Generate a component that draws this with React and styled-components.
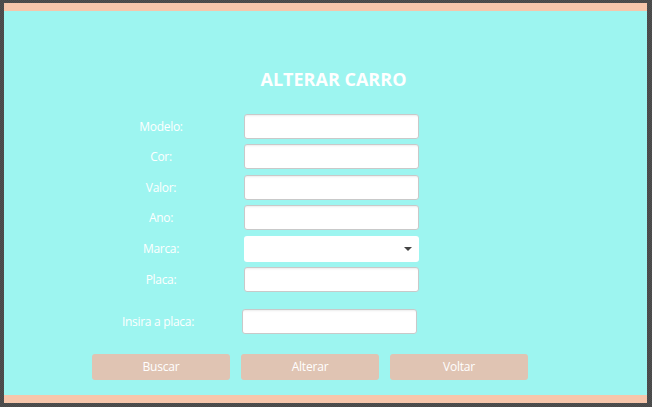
import React from 'react';
import styled, { createGlobalStyle } from 'styled-components';

const GlobalStyle = createGlobalStyle`
   html, body {
      margin: 0;
      padding: 0;
      background: #4b4b4b;
      font-family: "Open Sans", "Liberation Sans", sans-serif;
   }
`;

const Frame = styled.div`
   width: 652px;
   height: 407px;
   box-sizing: border-box;
   padding: 3px 5px 4px 4px;
   background-color: #4b4b4b;
   background-image: repeating-conic-gradient(#474747 0 25%, #505050 0 50%);
   background-size: 2px 2px;
`;

const Panel = styled.div`
   height: 100%;
   box-sizing: border-box;
   background: #9df5f0;
   border-top: 8px solid #f6c6ab;
   border-bottom: 8px solid #f6c6ab;
   display: flex;
   flex-direction: column;
`;

const Title = styled.h1`
   margin: 58px 0 0 0;
   padding-left: 16px;
   text-align: center;
   font-size: 18px;
   line-height: 20px;
   font-weight: 700;
   color: #ffffff;
`;

const Form = styled.div`
   margin: 25px 0 0 88px;
   display: grid;
   grid-template-columns: 138px 175px;
   column-gap: 14px;
   row-gap: 5.4px;
`;

const Label = styled.span`
   display: flex;
   align-items: center;
   justify-content: center;
   font-size: 12px;
   font-weight: 400;
   letter-spacing: -0.3px;
   color: #ffffff;
`;

const Input = styled.input`
   height: 25px;
   box-sizing: border-box;
   margin: 0;
   border: 1px solid #c9c9c9;
   border-radius: 3px;
   background: #ffffff;
   box-shadow: inset 0 2px 2px -1px rgba(0, 0, 0, 0.08);
   outline: none;
`;

const Select = styled.div`
   height: 26px;
   box-sizing: border-box;
   border-radius: 3px;
   background: #ffffff;
   display: flex;
   align-items: center;
   justify-content: flex-end;
   padding-right: 7px;
`;

const Arrow = styled.span`
   width: 0;
   height: 0;
   border-left: 4px solid transparent;
   border-right: 4px solid transparent;
   border-top: 4px solid #444444;
`;

const SearchRow = styled.div`
   margin: 17px 0 0 88px;
   display: grid;
   grid-template-columns: 132px 175px;
   column-gap: 18px;
   align-items: center;
`;

const Buttons = styled.div`
   margin: 20px 0 0 88px;
   display: grid;
   grid-template-columns: repeat(3, 138px);
   column-gap: 11px;
`;

const Button = styled.button`
   height: 26px;
   margin: 0;
   border: none;
   border-radius: 3px;
   background: #e0c4b3;
   color: #ffffff;
   font-family: "Open Sans", "Liberation Sans", sans-serif;
   font-size: 12px;
   letter-spacing: -0.2px;
   padding: 0;
`;

const fields = ['Modelo:', 'Cor:', 'Valor:', 'Ano:'];

const App = () => (
   <Frame>
      <GlobalStyle />
      <Panel>
         <Title>ALTERAR CARRO</Title>
         <Form>
            {fields.map((f) => (
               <React.Fragment key={f}>
                  <Label>{f}</Label>
                  <Input />
               </React.Fragment>
            ))}
            <Label>Marca:</Label>
            <Select>
               <Arrow />
            </Select>
            <Label>Placa:</Label>
            <Input />
         </Form>
         <SearchRow>
            <Label>Insira a placa:</Label>
            <Input />
         </SearchRow>
         <Buttons>
            <Button>Buscar</Button>
            <Button>Alterar</Button>
            <Button>Voltar</Button>
         </Buttons>
      </Panel>
   </Frame>
);

export default App;
